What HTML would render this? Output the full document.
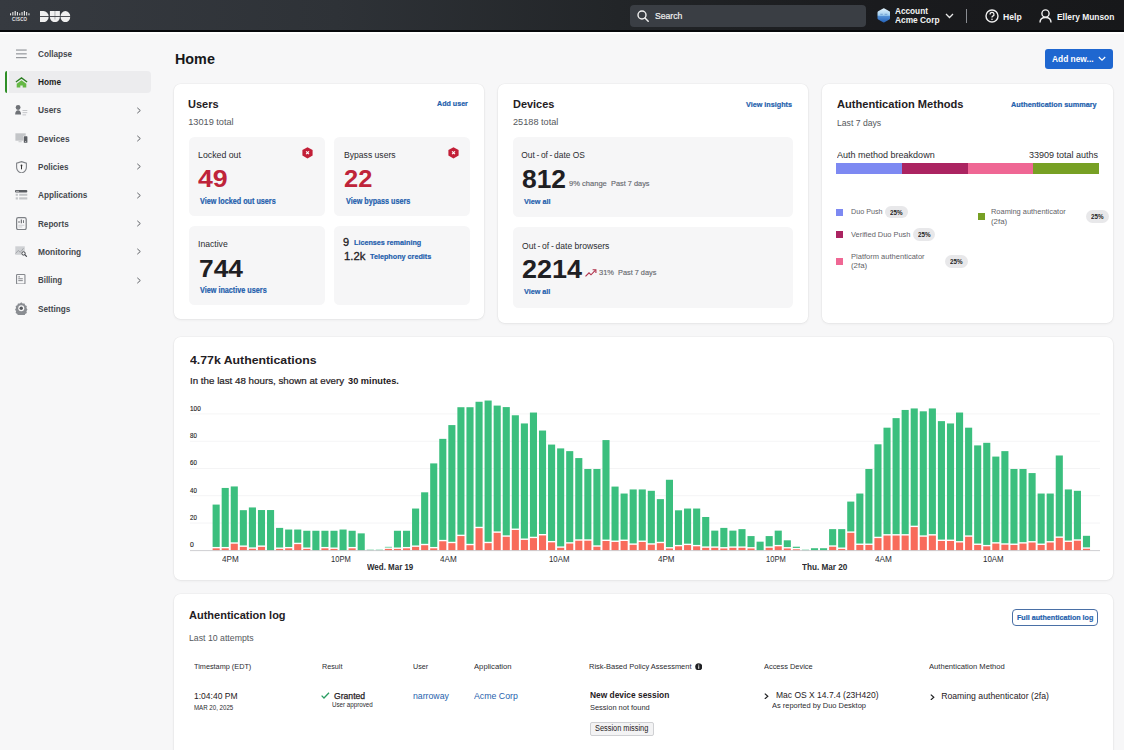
<!DOCTYPE html>
<html><head><meta charset="utf-8"><title>Duo Home</title>
<style>
html,body{margin:0;padding:0;}
body{width:1124px;height:750px;overflow:hidden;position:relative;background:#f7f7f8;font-family:"Liberation Sans",sans-serif;}
.t{position:absolute;white-space:nowrap;transform-origin:0 0;}
.r{position:absolute;}
</style></head><body>
<div class="r" style="left:0px;top:0px;width:1124px;height:31px;background:linear-gradient(90deg,#363a40 0%,#2e3237 30%,#222528 55%,#1a1b1e 78%,#17181a 100%);"></div>
<div class="r" style="left:0px;top:30px;width:1124px;height:1.6px;background:#07090c;"></div>
<div class="r" style="left:0px;top:32px;width:1124px;height:1.6px;background:#ffffff;"></div>
<svg class="r" style="left:10px;top:10.5px" width="20" height="11" viewBox="0 0 20 11">
<g fill="#e6e6e6">
<rect x="0" y="2.3" width="1.1" height="2"/><rect x="2.3" y="1" width="1.1" height="3.5"/><rect x="4.6" y="0" width="1.2" height="4.6"/>
<rect x="6.9" y="1" width="1.1" height="3.5"/><rect x="9.2" y="2.3" width="1.1" height="2"/><rect x="11.5" y="1" width="1.1" height="3.5"/>
<rect x="13.8" y="0" width="1.2" height="4.6"/><rect x="16.1" y="1" width="1.1" height="3.5"/><rect x="18.4" y="2.3" width="1.1" height="2"/>
</g>
<text x="9.7" y="10" font-size="4.6" font-weight="700" fill="#e6e6e6" text-anchor="middle" font-family="Liberation Sans" letter-spacing="0.25" textLength="15.2" lengthAdjust="spacingAndGlyphs">CISCO</text>
</svg>
<svg class="r" style="left:40px;top:11px" width="31" height="11.2" viewBox="0 0 31 11.2">
<g fill="#efefef">
<path d="M0 0h3.4a5.3 5.6 0 0 1 0 11.2H0z"/>
<path d="M9.9 0h10v6a5 5.2 0 0 1 -10 0z"/>
<ellipse cx="25.4" cy="5.6" rx="4.9" ry="5.6"/>
</g>
<rect x="14.5" y="0" width="0.9" height="8.5" fill="#a5a7aa"/>
<rect x="0" y="5.1" width="31" height="0.9" fill="#3a3d42"/>
</svg>
<div class="r" style="left:630px;top:5px;width:236px;height:22px;background:#3a3e44;border-radius:4px;"></div>
<svg class="r" style="left:637px;top:10px" width="12" height="12" viewBox="0 0 12 12"><circle cx="5" cy="5" r="4" fill="none" stroke="#f0f0f0" stroke-width="1.4"/><path d="M8 8l3.2 3.2" stroke="#f0f0f0" stroke-width="1.5" stroke-linecap="round"/></svg>
<div class="t" style="left:655.40px;top:11.23px;font-size:9.80px;line-height:10.95px;color:#f2f2f2;transform:scaleX(0.8820);-webkit-text-stroke:0.2px #f2f2f2;">Search</div>
<svg class="r" style="left:876.8px;top:8.3px" width="13.6" height="14.8" viewBox="0 0 13.6 14.8"><defs><linearGradient id="hg" x1="0" y1="0" x2="0" y2="1"><stop offset="0" stop-color="#e2f2fc"/><stop offset="0.5" stop-color="#9fcdf0"/><stop offset="0.53" stop-color="#5592d8"/><stop offset="1" stop-color="#2462b8"/></linearGradient></defs><path d="M6.1 0.5Q6.8 0.1 7.5 0.5L12.4 3.3Q13.1 3.7 13.1 4.5V10.3Q13.1 11.1 12.4 11.5L7.5 14.3Q6.8 14.7 6.1 14.3L1.2 11.5Q0.5 11.1 0.5 10.3V4.5Q0.5 3.7 1.2 3.3z" fill="url(#hg)"/><path d="M3.3 6.3h2.5M7.6 6.3h2.8" stroke="#5f8fc7" stroke-width="0.9" opacity="0.8"/></svg>
<div class="t" style="left:895.20px;top:6.18px;font-size:9.30px;line-height:10.39px;color:#f4f4f4;font-weight:700;transform:scaleX(0.8844);">Account</div>
<div class="t" style="left:895.20px;top:14.68px;font-size:9.30px;line-height:10.39px;color:#f4f4f4;font-weight:700;transform:scaleX(0.8989);">Acme Corp</div>
<svg class="r" style="left:945px;top:13px" width="9" height="6" viewBox="0 0 9 6"><path d="M1 1l3.5 3.5L8 1" fill="none" stroke="#e8e8e8" stroke-width="1.3"/></svg>
<div class="r" style="left:965.5px;top:9px;width:1.3px;height:14px;background:#8a8d92;"></div>
<svg class="r" style="left:985px;top:9px" width="14" height="14" viewBox="0 0 14 14"><circle cx="7" cy="7" r="6" fill="none" stroke="#f0f0f0" stroke-width="1.4"/><path d="M5 5.4a2 2 0 1 1 2.8 1.8c-.6.3-.8.6-.8 1.3" fill="none" stroke="#f0f0f0" stroke-width="1.3"/><circle cx="7" cy="10.3" r=".8" fill="#f0f0f0"/></svg>
<div class="t" style="left:1003.30px;top:11.90px;font-size:9.50px;line-height:10.61px;color:#f4f4f4;font-weight:700;transform:scaleX(0.9092);">Help</div>
<svg class="r" style="left:1039px;top:9px" width="13" height="14" viewBox="0 0 13 14"><circle cx="6.5" cy="4.5" r="3.6" fill="none" stroke="#f0f0f0" stroke-width="1.4"/><path d="M1 13.5c0-3.2 2.4-5 5.5-5s5.5 1.8 5.5 5" fill="none" stroke="#f0f0f0" stroke-width="1.4"/></svg>
<div class="t" style="left:1056.80px;top:11.90px;font-size:9.50px;line-height:10.61px;color:#f4f4f4;font-weight:700;transform:scaleX(0.8825);">Ellery Munson</div>
<div class="r" style="left:0px;top:33.6px;width:162px;height:716.4px;background:#f7f7f8;"></div>
<div class="r" style="left:8.6px;top:70.8px;width:142px;height:22px;background:#ececee;border-radius:0 4px 4px 0;"></div>
<div class="r" style="left:4.6px;top:71px;width:2.7px;height:22px;background:#2f8f27;border-radius:3px 0 0 3px;"></div>
<div class="t" style="left:37.90px;top:48.68px;font-size:9.30px;line-height:10.39px;color:#45484d;font-weight:700;transform:scaleX(0.8819);">Collapse</div>
<div class="t" style="left:37.90px;top:77.03px;font-size:9.30px;line-height:10.39px;color:#1c1d20;font-weight:700;transform:scaleX(0.8896);">Home</div>
<div class="t" style="left:37.90px;top:105.38px;font-size:9.30px;line-height:10.39px;color:#45484d;font-weight:700;transform:scaleX(0.8973);">Users</div>
<svg class="r" style="left:135.6px;top:106.6px" width="6" height="7" viewBox="0 0 6 7"><path d="M1.3 0.8L4.3 3.5L1.3 6.2" fill="none" stroke="#5a5d62" stroke-width="0.95"/></svg>
<div class="t" style="left:37.90px;top:133.73px;font-size:9.30px;line-height:10.39px;color:#45484d;font-weight:700;transform:scaleX(0.8989);">Devices</div>
<svg class="r" style="left:135.6px;top:135.0px" width="6" height="7" viewBox="0 0 6 7"><path d="M1.3 0.8L4.3 3.5L1.3 6.2" fill="none" stroke="#5a5d62" stroke-width="0.95"/></svg>
<div class="t" style="left:37.90px;top:162.08px;font-size:9.30px;line-height:10.39px;color:#45484d;font-weight:700;transform:scaleX(0.8676);">Policies</div>
<svg class="r" style="left:135.6px;top:163.3px" width="6" height="7" viewBox="0 0 6 7"><path d="M1.3 0.8L4.3 3.5L1.3 6.2" fill="none" stroke="#5a5d62" stroke-width="0.95"/></svg>
<div class="t" style="left:37.90px;top:190.43px;font-size:9.30px;line-height:10.39px;color:#45484d;font-weight:700;transform:scaleX(0.8835);">Applications</div>
<svg class="r" style="left:135.6px;top:191.7px" width="6" height="7" viewBox="0 0 6 7"><path d="M1.3 0.8L4.3 3.5L1.3 6.2" fill="none" stroke="#5a5d62" stroke-width="0.95"/></svg>
<div class="t" style="left:37.90px;top:218.78px;font-size:9.30px;line-height:10.39px;color:#45484d;font-weight:700;transform:scaleX(0.8733);">Reports</div>
<svg class="r" style="left:135.6px;top:220.0px" width="6" height="7" viewBox="0 0 6 7"><path d="M1.3 0.8L4.3 3.5L1.3 6.2" fill="none" stroke="#5a5d62" stroke-width="0.95"/></svg>
<div class="t" style="left:37.90px;top:247.13px;font-size:9.30px;line-height:10.39px;color:#45484d;font-weight:700;transform:scaleX(0.8994);">Monitoring</div>
<svg class="r" style="left:135.6px;top:248.4px" width="6" height="7" viewBox="0 0 6 7"><path d="M1.3 0.8L4.3 3.5L1.3 6.2" fill="none" stroke="#5a5d62" stroke-width="0.95"/></svg>
<div class="t" style="left:37.90px;top:275.48px;font-size:9.30px;line-height:10.39px;color:#45484d;font-weight:700;transform:scaleX(0.8482);">Billing</div>
<svg class="r" style="left:135.6px;top:276.7px" width="6" height="7" viewBox="0 0 6 7"><path d="M1.3 0.8L4.3 3.5L1.3 6.2" fill="none" stroke="#5a5d62" stroke-width="0.95"/></svg>
<div class="t" style="left:37.90px;top:303.83px;font-size:9.30px;line-height:10.39px;color:#45484d;font-weight:700;transform:scaleX(0.8831);">Settings</div>
<svg class="r" style="left:16px;top:48.5px" width="11" height="10" viewBox="0 0 11 10"><g fill="#8c8f94"><rect x="0" y="0.5" width="10.7" height="1.1"/><rect x="0" y="4.3" width="10.7" height="1.1"/><rect x="0" y="8.1" width="10.7" height="1.1"/></g></svg>
<svg class="r" style="left:15px;top:76.5px" width="13" height="11" viewBox="0 0 13 11"><path d="M6.5 3.2L1.7 6.7V10.6H5.3V8.4H7.7V10.6H11.3V6.7z" fill="#65b845"/><path d="M0.9 5.1L6.5 0.9l5.6 4.2" fill="none" stroke="#2c7f22" stroke-width="1.3"/></svg>
<svg class="r" style="left:15px;top:104.5px" width="13" height="11" viewBox="0 0 13 11"><g fill="#6f7277"><circle cx="3.1" cy="2.5" r="2.4"/><path d="M0.1 9.6c0-2.6 1.2-4.3 3-4.3s3 1.7 3 4.3z"/></g><g fill="#b9bbbf"><rect x="7.5" y="5" width="4.8" height="0.8"/><rect x="7.5" y="7.3" width="4.8" height="0.8"/><rect x="7.5" y="9.5" width="3.6" height="0.8"/></g></svg>
<svg class="r" style="left:15px;top:133.3px" width="13" height="10.5" viewBox="0 0 13 10.5"><rect x="0.4" y="0.3" width="10.3" height="7.4" fill="#c3c5c8"/><rect x="3.5" y="8.3" width="3.2" height="0.9" fill="#c3c5c8"/><rect x="8.3" y="2.7" width="4.6" height="7.6" rx=".6" fill="#f7f7f8"/><rect x="8.8" y="3.2" width="3.6" height="6.6" rx=".5" fill="#5c5f64"/><rect x="10.1" y="8.2" width="1" height="0.8" fill="#ddd"/></svg>
<svg class="r" style="left:16px;top:160.6px" width="11.5" height="12.8" viewBox="0 0 11.5 12.8"><path d="M5.5 0.6L10.4 2.1V6.3C10.4 9.2 8.3 11.2 5.5 12.1 2.7 11.2 0.6 9.2 0.6 6.3V2.1z" fill="none" stroke="#808388" stroke-width="1.1"/><circle cx="5.5" cy="4.4" r="0.9" fill="#333"/><rect x="5" y="4.4" width="1" height="3.9" fill="#333"/></svg>
<svg class="r" style="left:15px;top:190px" width="12.5" height="10" viewBox="0 0 12.5 10"><rect x="0" y="0" width="12.3" height="2.5" rx="1" fill="#5a5d62"/><rect x="1" y="0.9" width="3" height="0.7" fill="#ddd"/><g fill="#c3c5c8"><rect x="0.7" y="3.8" width="2.2" height="2"/><rect x="4.2" y="3.8" width="8.1" height="2"/><rect x="0.7" y="7.3" width="2.2" height="2.2"/><rect x="4.2" y="7.3" width="8.1" height="2.2"/></g></svg>
<svg class="r" style="left:16px;top:216.5px" width="11" height="13.2" viewBox="0 0 11 13.2"><rect x="0.6" y="0.6" width="9.6" height="12" rx="1.6" fill="none" stroke="#7d8085" stroke-width="1.2"/><g fill="#55585d"><rect x="2.6" y="4" width="0.8" height="2"/><rect x="4.8" y="2.5" width="1" height="3.8"/><rect x="7.1" y="3.2" width="0.8" height="2.8"/></g><g fill="#c3c5c8"><rect x="2.3" y="7.8" width="6" height="0.8"/><rect x="2.3" y="9.6" width="4" height="0.8"/></g></svg>
<svg class="r" style="left:15px;top:246.3px" width="12.5" height="11" viewBox="0 0 12.5 11"><rect x="0.3" y="0.3" width="9.5" height="8.5" fill="#cfd1d4"/><path d="M0.5 7.5L3.3 4.5 5.3 6.3 8.5 2.2" fill="none" stroke="#9a9da1" stroke-width="0.8"/><circle cx="8.6" cy="7.5" r="2.6" fill="#f7f7f8"/><circle cx="8.5" cy="7.4" r="1.7" fill="none" stroke="#3b3e43" stroke-width="1"/><path d="M9.8 8.7l2 2" stroke="#3b3e43" stroke-width="1.1"/></svg>
<svg class="r" style="left:16px;top:273.6px" width="9.5" height="10.5" viewBox="0 0 9.5 10.5"><rect x="0.55" y="0.55" width="8.4" height="9.4" rx=".8" fill="none" stroke="#85888d" stroke-width="1.1"/><g fill="#6a6d72"><rect x="2.3" y="2.5" width="1.7" height="0.8"/><rect x="2.3" y="4.4" width="4.5" height="0.8"/><rect x="2.3" y="6.3" width="4.5" height="0.8"/></g></svg>
<svg class="r" style="left:15.3px;top:302px" width="12.5" height="12.5" viewBox="0 0 12.5 12.5"><path d="M6.25 0.2l1.4 1.4 1.9-.2.6 1.8 1.7.9-.4 1.9 1 1.6-1 1.6.4 1.9-1.7.9-.6 1.8-1.9-.2-1.4 1.4-1.4-1.4-1.9.2-.6-1.8-1.7-.9.4-1.9-1-1.6 1-1.6-.4-1.9 1.7-.9.6-1.8 1.9.2z" fill="#8a8d92"/><circle cx="6.25" cy="6.25" r="3" fill="#f7f7f8"/><circle cx="6.25" cy="6.25" r="1.7" fill="#55585d"/></svg>
<div class="r" style="left:162px;top:33.6px;width:962px;height:716.4px;background:#f7f7f8;"></div>
<div class="t" style="left:175.30px;top:51.09px;font-size:14.60px;line-height:16.31px;color:#16171a;font-weight:700;transform:scaleX(0.9830);">Home</div>
<div class="r" style="left:1045px;top:49px;width:68px;height:20px;background:#1f67d0;border-radius:3px;"></div>
<div class="t" style="left:1051.80px;top:55.02px;font-size:8.60px;line-height:9.61px;color:#ffffff;font-weight:700;transform:scaleX(0.9743);">Add new...</div>
<svg class="r" style="left:1097.5px;top:56px" width="8" height="6" viewBox="0 0 8 6"><path d="M0.8 1l3.2 3.2L7.2 1" fill="none" stroke="#fff" stroke-width="1.2"/></svg>
<div class="r" style="left:174px;top:83.5px;width:310px;height:235.7px;background:#fff;border-radius:6.5px;box-shadow:0 0 0 0.6px rgba(0,0,0,0.045),0 1px 3px rgba(0,0,0,0.06);"></div>
<div class="t" style="left:188.20px;top:97.80px;font-size:11.60px;line-height:12.96px;color:#1f2023;font-weight:700;transform:scaleX(0.9489);">Users</div>
<div class="t" style="left:436.50px;top:100.32px;font-size:7.60px;line-height:8.49px;color:#1f5fad;font-weight:700;-webkit-text-stroke:0.2px #1f5fad;transform:scaleX(0.9379);">Add user</div>
<div class="t" style="left:188.20px;top:117.37px;font-size:9.20px;line-height:10.28px;color:#55585d;">13019 total</div>
<div class="r" style="left:188.5px;top:137px;width:136px;height:79.4px;background:#f6f6f7;border-radius:5.5px;"></div>
<div class="r" style="left:334px;top:137px;width:135.5px;height:79.4px;background:#f6f6f7;border-radius:5.5px;"></div>
<div class="r" style="left:188.5px;top:226px;width:136px;height:79px;background:#f6f6f7;border-radius:5.5px;"></div>
<div class="r" style="left:334px;top:226px;width:135.5px;height:79px;background:#f6f6f7;border-radius:5.5px;"></div>
<div class="t" style="left:198.00px;top:150.17px;font-size:9.20px;line-height:10.28px;color:#2b2c30;transform:scaleX(0.9548);">Locked out</div>
<div class="t" style="left:198.00px;top:165.15px;font-size:24.70px;line-height:27.59px;color:#bf243a;font-weight:700;transform:scaleX(1.0833);">49</div>
<div class="t" style="left:200.00px;top:196.78px;font-size:8.20px;line-height:9.16px;color:#1f5fad;font-weight:700;-webkit-text-stroke:0.2px #1f5fad;transform:scaleX(0.8816);">View locked out users</div>
<div class="t" style="left:343.70px;top:150.17px;font-size:9.20px;line-height:10.28px;color:#2b2c30;transform:scaleX(0.9358);">Bypass users</div>
<div class="t" style="left:344.40px;top:165.15px;font-size:24.70px;line-height:27.59px;color:#bf243a;font-weight:700;transform:scaleX(1.0322);">22</div>
<div class="t" style="left:345.60px;top:196.78px;font-size:8.20px;line-height:9.16px;color:#1f5fad;font-weight:700;-webkit-text-stroke:0.2px #1f5fad;transform:scaleX(0.8795);">View bypass users</div>
<svg class="r" style="left:302.4px;top:147.3px" width="11" height="11.5" viewBox="0 0 11 11.5"><path d="M5.5 0.2L10.6 3v5.6L5.5 11.4 0.4 8.6V3z" fill="#c21f37"/><path d="M4.1 4.3l2.9 2.9M7 4.3L4.1 7.2" stroke="#fff" stroke-width="1.15"/></svg>
<svg class="r" style="left:447.8px;top:147.3px" width="11" height="11.5" viewBox="0 0 11 11.5"><path d="M5.5 0.2L10.6 3v5.6L5.5 11.4 0.4 8.6V3z" fill="#c21f37"/><path d="M4.1 4.3l2.9 2.9M7 4.3L4.1 7.2" stroke="#fff" stroke-width="1.15"/></svg>
<div class="t" style="left:198.00px;top:238.87px;font-size:9.20px;line-height:10.28px;color:#2b2c30;transform:scaleX(0.9371);">Inactive</div>
<div class="t" style="left:198.70px;top:254.85px;font-size:24.70px;line-height:27.59px;color:#1f2023;font-weight:700;transform:scaleX(1.0667);">744</div>
<div class="t" style="left:200.00px;top:285.78px;font-size:8.20px;line-height:9.16px;color:#1f5fad;font-weight:700;-webkit-text-stroke:0.2px #1f5fad;transform:scaleX(0.8845);">View inactive users</div>
<div class="t" style="left:343.30px;top:236.98px;font-size:10.30px;line-height:11.51px;color:#1f2023;transform:scaleX(1.0671);-webkit-text-stroke:0.3px #1f2023;">9</div>
<div class="t" style="left:354.00px;top:238.86px;font-size:8.00px;line-height:8.94px;color:#1f5fad;font-weight:700;-webkit-text-stroke:0.2px #1f5fad;transform:scaleX(0.8998);">Licenses remaining</div>
<div class="t" style="left:343.70px;top:250.91px;font-size:10.60px;line-height:11.84px;color:#1f2023;transform:scaleX(1.0654);-webkit-text-stroke:0.3px #1f2023;">1.2k</div>
<div class="t" style="left:370.40px;top:253.26px;font-size:8.00px;line-height:8.94px;color:#1f5fad;font-weight:700;-webkit-text-stroke:0.2px #1f5fad;transform:scaleX(0.9031);">Telephony credits</div>
<div class="r" style="left:498px;top:83.5px;width:310px;height:239.5px;background:#fff;border-radius:6.5px;box-shadow:0 0 0 0.6px rgba(0,0,0,0.045),0 1px 3px rgba(0,0,0,0.06);"></div>
<div class="t" style="left:512.80px;top:98.18px;font-size:11.40px;line-height:12.73px;color:#1f2023;font-weight:700;transform:scaleX(0.9607);">Devices</div>
<div class="t" style="left:745.70px;top:100.92px;font-size:7.60px;line-height:8.49px;color:#1f5fad;font-weight:700;-webkit-text-stroke:0.2px #1f5fad;transform:scaleX(0.9502);">View insights</div>
<div class="t" style="left:512.80px;top:117.29px;font-size:9.40px;line-height:10.50px;color:#55585d;transform:scaleX(0.9779);">25188 total</div>
<div class="r" style="left:512.7px;top:137.2px;width:280.6px;height:80px;background:#f6f6f7;border-radius:5.5px;"></div>
<div class="r" style="left:512.7px;top:227.3px;width:280.6px;height:80.4px;background:#f6f6f7;border-radius:5.5px;"></div>
<div class="t" style="left:521.30px;top:150.70px;font-size:8.40px;line-height:9.38px;color:#2b2c30;">Out - of - date OS</div>
<div class="t" style="left:521.70px;top:164.65px;font-size:25.80px;line-height:28.82px;color:#1f2023;font-weight:700;transform:scaleX(1.0235);">812</div>
<div class="t" style="left:569.20px;top:180.26px;font-size:8.00px;line-height:8.94px;color:#66696e;transform:scaleX(0.9441);-webkit-text-stroke:0.15px #66696e;">9% change</div>
<div class="t" style="left:611.20px;top:180.26px;font-size:8.00px;line-height:8.94px;color:#66696e;transform:scaleX(0.9211);-webkit-text-stroke:0.15px #66696e;">Past 7 days</div>
<div class="t" style="left:523.50px;top:197.76px;font-size:8.00px;line-height:8.94px;color:#1f5fad;font-weight:700;-webkit-text-stroke:0.2px #1f5fad;transform:scaleX(0.9075);">View all</div>
<div class="t" style="left:521.70px;top:242.10px;font-size:8.40px;line-height:9.38px;color:#2b2c30;transform:scaleX(1.0229);">Out - of - date browsers</div>
<div class="t" style="left:521.70px;top:255.45px;font-size:25.80px;line-height:28.82px;color:#1f2023;font-weight:700;transform:scaleX(1.0452);">2214</div>
<svg class="r" style="left:585px;top:269px" width="12" height="8" viewBox="0 0 12 8"><path d="M0.5 7.3L4 3.8l2 2L10.5 1.2" fill="none" stroke="#b0304a" stroke-width="1.1"/><path d="M7.6 0.8h3.3v3.3" fill="none" stroke="#b0304a" stroke-width="1.1"/></svg>
<div class="t" style="left:598.80px;top:269.46px;font-size:8.00px;line-height:8.94px;color:#66696e;transform:scaleX(0.9313);-webkit-text-stroke:0.15px #66696e;">31%</div>
<div class="t" style="left:618.40px;top:269.46px;font-size:8.00px;line-height:8.94px;color:#66696e;transform:scaleX(0.9163);-webkit-text-stroke:0.15px #66696e;">Past 7 days</div>
<div class="t" style="left:523.70px;top:287.76px;font-size:8.00px;line-height:8.94px;color:#1f5fad;font-weight:700;-webkit-text-stroke:0.2px #1f5fad;transform:scaleX(0.9007);">View all</div>
<div class="r" style="left:822px;top:83.5px;width:291px;height:239px;background:#fff;border-radius:6.5px;box-shadow:0 0 0 0.6px rgba(0,0,0,0.045),0 1px 3px rgba(0,0,0,0.06);"></div>
<div class="t" style="left:836.70px;top:98.30px;font-size:11.60px;line-height:12.96px;color:#1f2023;font-weight:700;transform:scaleX(0.9582);">Authentication Methods</div>
<div class="t" style="left:1011.00px;top:100.92px;font-size:7.60px;line-height:8.49px;color:#1f5fad;font-weight:700;-webkit-text-stroke:0.2px #1f5fad;transform:scaleX(0.9617);">Authentication summary</div>
<div class="t" style="left:836.70px;top:117.69px;font-size:9.40px;line-height:10.50px;color:#55585d;transform:scaleX(0.9214);">Last 7 days</div>
<div class="t" style="left:836.70px;top:150.49px;font-size:9.40px;line-height:10.50px;color:#2b2c30;transform:scaleX(0.9608);">Auth method breakdown</div>
<div class="t" style="left:1029.30px;top:150.49px;font-size:9.40px;line-height:10.50px;color:#2b2c30;transform:scaleX(0.9606);">33909 total auths</div>
<div class="r" style="left:836.3px;top:162.9px;width:65.7px;height:10.7px;background:#7d89f2;"></div>
<div class="r" style="left:902px;top:162.9px;width:65.5px;height:10.7px;background:#ab2461;"></div>
<div class="r" style="left:967.5px;top:162.9px;width:65.5px;height:10.7px;background:#ef6794;"></div>
<div class="r" style="left:1033px;top:162.9px;width:65.6px;height:10.7px;background:#77a024;"></div>
<div class="r" style="left:836.3px;top:209px;width:7px;height:7px;background:#7d89f2;"></div>
<div class="t" style="left:850.70px;top:208.32px;font-size:7.60px;line-height:8.49px;color:#5f6267;transform:scaleX(0.9471);">Duo Push</div>
<div class="r" style="left:885.3px;top:206px;width:22.4px;height:12.3px;background:#e8e8ea;border-radius:7px;"></div>
<div class="t" style="left:890.00px;top:208.84px;font-size:6.70px;line-height:7.48px;color:#222;font-weight:700;transform:scaleX(0.9403);">25%</div>
<div class="r" style="left:836.3px;top:231.4px;width:7px;height:7px;background:#ab2461;"></div>
<div class="t" style="left:850.70px;top:230.82px;font-size:7.60px;line-height:8.49px;color:#5f6267;transform:scaleX(0.9780);">Verified Duo Push</div>
<div class="r" style="left:913px;top:228.4px;width:22.4px;height:12.5px;background:#e8e8ea;border-radius:7px;"></div>
<div class="t" style="left:917.70px;top:231.24px;font-size:6.70px;line-height:7.48px;color:#222;font-weight:700;transform:scaleX(0.9403);">25%</div>
<div class="r" style="left:836.3px;top:257.8px;width:7px;height:7px;background:#ef6794;"></div>
<div class="t" style="left:850.70px;top:252.62px;font-size:7.60px;line-height:8.49px;color:#5f6267;transform:scaleX(0.9910);">Platform authenticator</div>
<div class="t" style="left:850.70px;top:262.22px;font-size:7.60px;line-height:8.49px;color:#5f6267;transform:scaleX(1.0373);">(2fa)</div>
<div class="r" style="left:945px;top:255px;width:22.5px;height:12.5px;background:#e8e8ea;border-radius:7px;"></div>
<div class="t" style="left:949.70px;top:257.84px;font-size:6.70px;line-height:7.48px;color:#222;font-weight:700;transform:scaleX(0.9403);">25%</div>
<div class="r" style="left:977.5px;top:212.7px;width:7px;height:7px;background:#77a024;"></div>
<div class="t" style="left:991.40px;top:208.32px;font-size:7.60px;line-height:8.49px;color:#5f6267;transform:scaleX(0.9783);">Roaming authenticator</div>
<div class="t" style="left:991.40px;top:217.92px;font-size:7.60px;line-height:8.49px;color:#5f6267;transform:scaleX(1.0373);">(2fa)</div>
<div class="r" style="left:1086px;top:210.3px;width:22.5px;height:12.4px;background:#e8e8ea;border-radius:7px;"></div>
<div class="t" style="left:1090.70px;top:213.14px;font-size:6.70px;line-height:7.48px;color:#222;font-weight:700;transform:scaleX(0.9403);">25%</div>
<div class="r" style="left:174px;top:336.5px;width:939px;height:243.5px;background:#fff;border-radius:6.5px;box-shadow:0 0 0 0.6px rgba(0,0,0,0.045),0 1px 3px rgba(0,0,0,0.06);"></div>
<div class="t" style="left:190.20px;top:354.12px;font-size:11.80px;line-height:13.18px;color:#1f2023;font-weight:700;transform:scaleX(1.0416);">4.77k Authentications</div>
<div class="t" style="left:0;top:0"></div>
<div class="t" style="left:190.00px;top:375.59px;font-size:9.40px;line-height:10.50px;color:#1f2023;transform:scaleX(1.0413);-webkit-text-stroke:0.2px #1f2023;">In the last 48 hours, shown at every</div>
<div class="t" style="left:348.00px;top:375.59px;font-size:9.40px;line-height:10.50px;color:#1f2023;font-weight:700;transform:scaleX(0.9865);">30 minutes.</div>
<svg class="r" style="left:0;top:0" width="1124" height="750" viewBox="0 0 1124 750"><rect x="190" y="522.63" width="910" height="0.8" fill="#f2f2f3"/><rect x="190" y="495.36" width="910" height="0.8" fill="#f2f2f3"/><rect x="190" y="468.08" width="910" height="0.8" fill="#f2f2f3"/><rect x="190" y="440.81" width="910" height="0.8" fill="#f2f2f3"/><rect x="190" y="413.54" width="910" height="0.8" fill="#f2f2f3"/><rect x="212.60" y="548.35" width="7.1" height="2.05" fill="#f86b5b"/><rect x="212.60" y="504.58" width="7.1" height="42.37" fill="#3bbf7e"/><rect x="221.67" y="548.35" width="7.1" height="2.05" fill="#f86b5b"/><rect x="221.67" y="487.95" width="7.1" height="59.01" fill="#3bbf7e"/><rect x="230.73" y="543.72" width="7.1" height="6.68" fill="#f86b5b"/><rect x="230.73" y="486.45" width="7.1" height="55.87" fill="#3bbf7e"/><rect x="239.80" y="546.85" width="7.1" height="3.55" fill="#f86b5b"/><rect x="239.80" y="510.17" width="7.1" height="35.28" fill="#3bbf7e"/><rect x="248.86" y="548.76" width="7.1" height="1.64" fill="#f86b5b"/><rect x="248.86" y="507.45" width="7.1" height="39.92" fill="#3bbf7e"/><rect x="257.93" y="546.85" width="7.1" height="3.55" fill="#f86b5b"/><rect x="257.93" y="510.04" width="7.1" height="35.42" fill="#3bbf7e"/><rect x="267.00" y="510.04" width="7.1" height="40.36" fill="#3bbf7e"/><rect x="276.06" y="548.90" width="7.1" height="1.50" fill="#f86b5b"/><rect x="276.06" y="527.90" width="7.1" height="19.60" fill="#3bbf7e"/><rect x="285.13" y="548.35" width="7.1" height="2.05" fill="#f86b5b"/><rect x="285.13" y="529.54" width="7.1" height="17.42" fill="#3bbf7e"/><rect x="294.19" y="544.13" width="7.1" height="6.27" fill="#f86b5b"/><rect x="294.19" y="529.54" width="7.1" height="13.19" fill="#3bbf7e"/><rect x="303.26" y="548.90" width="7.1" height="1.50" fill="#f86b5b"/><rect x="303.26" y="530.76" width="7.1" height="16.74" fill="#3bbf7e"/><rect x="312.33" y="530.76" width="7.1" height="19.64" fill="#3bbf7e"/><rect x="321.39" y="548.35" width="7.1" height="2.05" fill="#f86b5b"/><rect x="321.39" y="530.76" width="7.1" height="16.19" fill="#3bbf7e"/><rect x="330.46" y="548.90" width="7.1" height="1.50" fill="#f86b5b"/><rect x="330.46" y="530.76" width="7.1" height="16.74" fill="#3bbf7e"/><rect x="339.52" y="529.54" width="7.1" height="20.86" fill="#3bbf7e"/><rect x="348.59" y="548.35" width="7.1" height="2.05" fill="#f86b5b"/><rect x="348.59" y="530.76" width="7.1" height="16.19" fill="#3bbf7e"/><rect x="357.66" y="533.36" width="7.1" height="17.04" fill="#3bbf7e"/><rect x="366.72" y="549.72" width="7.1" height="0.68" fill="#3bbf7e"/><rect x="375.79" y="549.72" width="7.1" height="0.68" fill="#3bbf7e"/><rect x="384.85" y="548.90" width="7.1" height="1.50" fill="#f86b5b"/><rect x="384.85" y="546.85" width="7.1" height="0.65" fill="#3bbf7e"/><rect x="393.92" y="548.90" width="7.1" height="1.50" fill="#f86b5b"/><rect x="393.92" y="530.76" width="7.1" height="16.74" fill="#3bbf7e"/><rect x="402.99" y="548.35" width="7.1" height="2.05" fill="#f86b5b"/><rect x="402.99" y="530.76" width="7.1" height="16.19" fill="#3bbf7e"/><rect x="412.05" y="546.85" width="7.1" height="3.55" fill="#f86b5b"/><rect x="412.05" y="508.54" width="7.1" height="36.92" fill="#3bbf7e"/><rect x="421.12" y="545.22" width="7.1" height="5.18" fill="#f86b5b"/><rect x="421.12" y="492.31" width="7.1" height="51.51" fill="#3bbf7e"/><rect x="430.18" y="548.35" width="7.1" height="2.05" fill="#f86b5b"/><rect x="430.18" y="463.40" width="7.1" height="83.55" fill="#3bbf7e"/><rect x="439.25" y="541.26" width="7.1" height="9.14" fill="#f86b5b"/><rect x="439.25" y="438.86" width="7.1" height="101.01" fill="#3bbf7e"/><rect x="448.32" y="543.17" width="7.1" height="7.23" fill="#f86b5b"/><rect x="448.32" y="425.09" width="7.1" height="116.69" fill="#3bbf7e"/><rect x="457.38" y="536.08" width="7.1" height="14.32" fill="#f86b5b"/><rect x="457.38" y="407.22" width="7.1" height="127.46" fill="#3bbf7e"/><rect x="466.45" y="545.22" width="7.1" height="5.18" fill="#f86b5b"/><rect x="466.45" y="407.22" width="7.1" height="136.60" fill="#3bbf7e"/><rect x="475.51" y="528.17" width="7.1" height="22.23" fill="#f86b5b"/><rect x="475.51" y="401.77" width="7.1" height="125.01" fill="#3bbf7e"/><rect x="484.58" y="543.17" width="7.1" height="7.23" fill="#f86b5b"/><rect x="484.58" y="400.54" width="7.1" height="141.23" fill="#3bbf7e"/><rect x="493.65" y="532.81" width="7.1" height="17.59" fill="#f86b5b"/><rect x="493.65" y="405.59" width="7.1" height="125.82" fill="#3bbf7e"/><rect x="502.71" y="536.76" width="7.1" height="13.64" fill="#f86b5b"/><rect x="502.71" y="407.09" width="7.1" height="128.28" fill="#3bbf7e"/><rect x="511.78" y="529.95" width="7.1" height="20.45" fill="#f86b5b"/><rect x="511.78" y="415.27" width="7.1" height="113.28" fill="#3bbf7e"/><rect x="520.84" y="539.90" width="7.1" height="10.50" fill="#f86b5b"/><rect x="520.84" y="423.45" width="7.1" height="115.05" fill="#3bbf7e"/><rect x="529.91" y="538.13" width="7.1" height="12.27" fill="#f86b5b"/><rect x="529.91" y="412.54" width="7.1" height="124.19" fill="#3bbf7e"/><rect x="538.98" y="535.40" width="7.1" height="15.00" fill="#f86b5b"/><rect x="538.98" y="430.54" width="7.1" height="103.46" fill="#3bbf7e"/><rect x="548.04" y="542.35" width="7.1" height="8.05" fill="#f86b5b"/><rect x="548.04" y="444.58" width="7.1" height="96.37" fill="#3bbf7e"/><rect x="557.11" y="547.81" width="7.1" height="2.59" fill="#f86b5b"/><rect x="557.11" y="448.40" width="7.1" height="98.01" fill="#3bbf7e"/><rect x="566.17" y="543.58" width="7.1" height="6.82" fill="#f86b5b"/><rect x="566.17" y="451.13" width="7.1" height="91.05" fill="#3bbf7e"/><rect x="575.24" y="540.72" width="7.1" height="9.68" fill="#f86b5b"/><rect x="575.24" y="458.08" width="7.1" height="81.23" fill="#3bbf7e"/><rect x="584.31" y="540.72" width="7.1" height="9.68" fill="#f86b5b"/><rect x="584.31" y="468.99" width="7.1" height="70.33" fill="#3bbf7e"/><rect x="593.37" y="546.72" width="7.1" height="3.68" fill="#f86b5b"/><rect x="593.37" y="468.99" width="7.1" height="76.33" fill="#3bbf7e"/><rect x="602.44" y="540.99" width="7.1" height="9.41" fill="#f86b5b"/><rect x="602.44" y="440.08" width="7.1" height="99.51" fill="#3bbf7e"/><rect x="611.50" y="541.95" width="7.1" height="8.45" fill="#f86b5b"/><rect x="611.50" y="486.58" width="7.1" height="53.96" fill="#3bbf7e"/><rect x="620.57" y="540.99" width="7.1" height="9.41" fill="#f86b5b"/><rect x="620.57" y="493.54" width="7.1" height="46.05" fill="#3bbf7e"/><rect x="629.64" y="544.81" width="7.1" height="5.59" fill="#f86b5b"/><rect x="629.64" y="489.45" width="7.1" height="53.96" fill="#3bbf7e"/><rect x="638.70" y="541.95" width="7.1" height="8.45" fill="#f86b5b"/><rect x="638.70" y="489.45" width="7.1" height="51.10" fill="#3bbf7e"/><rect x="647.77" y="544.67" width="7.1" height="5.73" fill="#f86b5b"/><rect x="647.77" y="490.81" width="7.1" height="52.46" fill="#3bbf7e"/><rect x="656.83" y="543.17" width="7.1" height="7.23" fill="#f86b5b"/><rect x="656.83" y="499.13" width="7.1" height="42.64" fill="#3bbf7e"/><rect x="665.90" y="548.49" width="7.1" height="1.91" fill="#f86b5b"/><rect x="665.90" y="479.77" width="7.1" height="67.33" fill="#3bbf7e"/><rect x="674.97" y="546.31" width="7.1" height="4.09" fill="#f86b5b"/><rect x="674.97" y="510.31" width="7.1" height="34.60" fill="#3bbf7e"/><rect x="684.03" y="545.08" width="7.1" height="5.32" fill="#f86b5b"/><rect x="684.03" y="508.54" width="7.1" height="35.14" fill="#3bbf7e"/><rect x="693.10" y="546.31" width="7.1" height="4.09" fill="#f86b5b"/><rect x="693.10" y="508.54" width="7.1" height="36.37" fill="#3bbf7e"/><rect x="702.16" y="547.81" width="7.1" height="2.59" fill="#f86b5b"/><rect x="702.16" y="516.99" width="7.1" height="29.42" fill="#3bbf7e"/><rect x="711.23" y="547.81" width="7.1" height="2.59" fill="#f86b5b"/><rect x="711.23" y="530.63" width="7.1" height="15.78" fill="#3bbf7e"/><rect x="720.30" y="548.49" width="7.1" height="1.91" fill="#f86b5b"/><rect x="720.30" y="527.90" width="7.1" height="19.19" fill="#3bbf7e"/><rect x="729.36" y="547.81" width="7.1" height="2.59" fill="#f86b5b"/><rect x="729.36" y="530.63" width="7.1" height="15.78" fill="#3bbf7e"/><rect x="738.43" y="547.81" width="7.1" height="2.59" fill="#f86b5b"/><rect x="738.43" y="529.13" width="7.1" height="17.28" fill="#3bbf7e"/><rect x="747.49" y="548.49" width="7.1" height="1.91" fill="#f86b5b"/><rect x="747.49" y="536.08" width="7.1" height="11.01" fill="#3bbf7e"/><rect x="756.56" y="541.67" width="7.1" height="8.73" fill="#3bbf7e"/><rect x="765.63" y="547.81" width="7.1" height="2.59" fill="#f86b5b"/><rect x="765.63" y="536.08" width="7.1" height="10.33" fill="#3bbf7e"/><rect x="774.69" y="546.31" width="7.1" height="4.09" fill="#f86b5b"/><rect x="774.69" y="530.63" width="7.1" height="14.28" fill="#3bbf7e"/><rect x="783.76" y="548.49" width="7.1" height="1.91" fill="#f86b5b"/><rect x="783.76" y="540.31" width="7.1" height="6.78" fill="#3bbf7e"/><rect x="792.82" y="549.31" width="7.1" height="1.09" fill="#f86b5b"/><rect x="792.82" y="546.72" width="7.1" height="1.19" fill="#3bbf7e"/><rect x="801.89" y="549.72" width="7.1" height="0.68" fill="#3bbf7e"/><rect x="810.96" y="548.22" width="7.1" height="2.18" fill="#3bbf7e"/><rect x="820.02" y="548.22" width="7.1" height="2.18" fill="#3bbf7e"/><rect x="829.09" y="546.72" width="7.1" height="3.68" fill="#f86b5b"/><rect x="829.09" y="529.13" width="7.1" height="16.19" fill="#3bbf7e"/><rect x="838.15" y="548.90" width="7.1" height="1.50" fill="#f86b5b"/><rect x="838.15" y="529.13" width="7.1" height="18.37" fill="#3bbf7e"/><rect x="847.22" y="532.81" width="7.1" height="17.59" fill="#f86b5b"/><rect x="847.22" y="501.58" width="7.1" height="29.83" fill="#3bbf7e"/><rect x="856.29" y="544.95" width="7.1" height="5.45" fill="#f86b5b"/><rect x="856.29" y="493.54" width="7.1" height="50.01" fill="#3bbf7e"/><rect x="865.35" y="544.95" width="7.1" height="5.45" fill="#f86b5b"/><rect x="865.35" y="468.99" width="7.1" height="74.55" fill="#3bbf7e"/><rect x="874.42" y="538.13" width="7.1" height="12.27" fill="#f86b5b"/><rect x="874.42" y="444.31" width="7.1" height="92.42" fill="#3bbf7e"/><rect x="883.48" y="535.54" width="7.1" height="14.86" fill="#f86b5b"/><rect x="883.48" y="427.68" width="7.1" height="106.46" fill="#3bbf7e"/><rect x="892.55" y="535.54" width="7.1" height="14.86" fill="#f86b5b"/><rect x="892.55" y="418.13" width="7.1" height="116.01" fill="#3bbf7e"/><rect x="901.62" y="535.54" width="7.1" height="14.86" fill="#f86b5b"/><rect x="901.62" y="409.95" width="7.1" height="124.19" fill="#3bbf7e"/><rect x="910.68" y="527.08" width="7.1" height="23.32" fill="#f86b5b"/><rect x="910.68" y="408.45" width="7.1" height="117.23" fill="#3bbf7e"/><rect x="919.75" y="536.76" width="7.1" height="13.64" fill="#f86b5b"/><rect x="919.75" y="411.31" width="7.1" height="124.05" fill="#3bbf7e"/><rect x="928.81" y="535.54" width="7.1" height="14.86" fill="#f86b5b"/><rect x="928.81" y="408.45" width="7.1" height="125.69" fill="#3bbf7e"/><rect x="937.88" y="540.99" width="7.1" height="9.41" fill="#f86b5b"/><rect x="937.88" y="421.13" width="7.1" height="118.46" fill="#3bbf7e"/><rect x="946.95" y="540.99" width="7.1" height="9.41" fill="#f86b5b"/><rect x="946.95" y="423.45" width="7.1" height="116.14" fill="#3bbf7e"/><rect x="956.01" y="542.49" width="7.1" height="7.91" fill="#f86b5b"/><rect x="956.01" y="412.54" width="7.1" height="128.55" fill="#3bbf7e"/><rect x="965.08" y="536.76" width="7.1" height="13.64" fill="#f86b5b"/><rect x="965.08" y="427.68" width="7.1" height="107.69" fill="#3bbf7e"/><rect x="974.14" y="544.95" width="7.1" height="5.45" fill="#f86b5b"/><rect x="974.14" y="445.40" width="7.1" height="98.14" fill="#3bbf7e"/><rect x="983.21" y="546.31" width="7.1" height="4.09" fill="#f86b5b"/><rect x="983.21" y="442.81" width="7.1" height="102.10" fill="#3bbf7e"/><rect x="992.28" y="543.58" width="7.1" height="6.82" fill="#f86b5b"/><rect x="992.28" y="456.58" width="7.1" height="85.60" fill="#3bbf7e"/><rect x="1001.34" y="544.67" width="7.1" height="5.73" fill="#f86b5b"/><rect x="1001.34" y="451.13" width="7.1" height="92.14" fill="#3bbf7e"/><rect x="1010.41" y="544.95" width="7.1" height="5.45" fill="#f86b5b"/><rect x="1010.41" y="468.99" width="7.1" height="74.55" fill="#3bbf7e"/><rect x="1019.47" y="543.58" width="7.1" height="6.82" fill="#f86b5b"/><rect x="1019.47" y="468.99" width="7.1" height="73.19" fill="#3bbf7e"/><rect x="1028.54" y="542.49" width="7.1" height="7.91" fill="#f86b5b"/><rect x="1028.54" y="473.08" width="7.1" height="68.01" fill="#3bbf7e"/><rect x="1037.61" y="544.95" width="7.1" height="5.45" fill="#f86b5b"/><rect x="1037.61" y="493.54" width="7.1" height="50.01" fill="#3bbf7e"/><rect x="1046.67" y="542.49" width="7.1" height="7.91" fill="#f86b5b"/><rect x="1046.67" y="493.54" width="7.1" height="47.55" fill="#3bbf7e"/><rect x="1055.74" y="537.85" width="7.1" height="12.55" fill="#f86b5b"/><rect x="1055.74" y="455.49" width="7.1" height="80.96" fill="#3bbf7e"/><rect x="1064.80" y="541.95" width="7.1" height="8.45" fill="#f86b5b"/><rect x="1064.80" y="489.45" width="7.1" height="51.10" fill="#3bbf7e"/><rect x="1073.87" y="540.72" width="7.1" height="9.68" fill="#f86b5b"/><rect x="1073.87" y="490.81" width="7.1" height="48.51" fill="#3bbf7e"/><rect x="1082.94" y="548.76" width="7.1" height="1.64" fill="#f86b5b"/><rect x="1082.94" y="535.81" width="7.1" height="11.55" fill="#3bbf7e"/><rect x="190" y="550.20" width="910" height="0.9" fill="#c9c9cc"/></svg>
<div class="t" style="left:190.20px;top:541.11px;font-size:7.50px;line-height:8.38px;color:#222;transform:scaleX(0.9129);-webkit-text-stroke:0.15px #222;">0</div>
<div class="t" style="left:190.20px;top:513.84px;font-size:7.50px;line-height:8.38px;color:#222;transform:scaleX(0.8168);-webkit-text-stroke:0.15px #222;">20</div>
<div class="t" style="left:190.20px;top:486.57px;font-size:7.50px;line-height:8.38px;color:#222;transform:scaleX(0.8168);-webkit-text-stroke:0.15px #222;">40</div>
<div class="t" style="left:190.20px;top:459.30px;font-size:7.50px;line-height:8.38px;color:#222;transform:scaleX(0.8168);-webkit-text-stroke:0.15px #222;">60</div>
<div class="t" style="left:190.20px;top:432.02px;font-size:7.50px;line-height:8.38px;color:#222;transform:scaleX(0.8168);-webkit-text-stroke:0.15px #222;">80</div>
<div class="t" style="left:190.20px;top:404.75px;font-size:7.50px;line-height:8.38px;color:#222;transform:scaleX(0.8543);-webkit-text-stroke:0.15px #222;">100</div>
<div class="t" style="left:222.40px;top:554.94px;font-size:8.80px;line-height:9.83px;color:#2b2c30;transform:scaleX(0.9235);">4PM</div>
<div class="t" style="left:331.30px;top:554.94px;font-size:8.80px;line-height:9.83px;color:#2b2c30;transform:scaleX(0.8577);">10PM</div>
<div class="t" style="left:440.40px;top:554.94px;font-size:8.80px;line-height:9.83px;color:#2b2c30;transform:scaleX(0.9235);">4AM</div>
<div class="t" style="left:548.70px;top:554.94px;font-size:8.80px;line-height:9.83px;color:#2b2c30;transform:scaleX(0.8882);">10AM</div>
<div class="t" style="left:657.50px;top:554.94px;font-size:8.80px;line-height:9.83px;color:#2b2c30;transform:scaleX(0.9124);">4PM</div>
<div class="t" style="left:766.20px;top:554.94px;font-size:8.80px;line-height:9.83px;color:#2b2c30;transform:scaleX(0.8577);">10PM</div>
<div class="t" style="left:875.20px;top:554.94px;font-size:8.80px;line-height:9.83px;color:#2b2c30;transform:scaleX(0.9345);">4AM</div>
<div class="t" style="left:983.00px;top:554.94px;font-size:8.80px;line-height:9.83px;color:#2b2c30;transform:scaleX(0.9013);">10AM</div>
<div class="t" style="left:367.40px;top:562.94px;font-size:8.80px;line-height:9.83px;color:#2b2c30;font-weight:700;transform:scaleX(0.9048);">Wed. Mar 19</div>
<div class="t" style="left:802.40px;top:562.94px;font-size:8.80px;line-height:9.83px;color:#2b2c30;font-weight:700;transform:scaleX(0.9287);">Thu. Mar 20</div>
<div class="r" style="left:174.3px;top:594.3px;width:939px;height:200px;background:#fff;border-radius:6.5px;box-shadow:0 0 0 0.6px rgba(0,0,0,0.045),0 1px 3px rgba(0,0,0,0.06);"></div>
<div class="t" style="left:189.30px;top:609.30px;font-size:11.60px;line-height:12.96px;color:#1f2023;font-weight:700;transform:scaleX(0.9490);">Authentication log</div>
<div class="t" style="left:189.30px;top:632.65px;font-size:9.00px;line-height:10.05px;color:#55585d;transform:scaleX(0.9706);">Last 10 attempts</div>
<div class="r" style="left:1011.7px;top:609.2px;width:86.3px;height:16.5px;box-sizing:border-box;border:1.4px solid #4a70a6;border-radius:4px;background:#fff;"></div>
<div class="t" style="left:1016.60px;top:614.32px;font-size:7.60px;line-height:8.49px;color:#1f5fad;font-weight:700;-webkit-text-stroke:0.2px #1f5fad;transform:scaleX(0.9426);">Full authentication log</div>
<div class="t" style="left:193.90px;top:663.34px;font-size:7.80px;line-height:8.71px;color:#2b2c30;transform:scaleX(0.9358);">Timestamp (EDT)</div>
<div class="t" style="left:321.60px;top:663.34px;font-size:7.80px;line-height:8.71px;color:#2b2c30;transform:scaleX(0.9225);">Result</div>
<div class="t" style="left:412.80px;top:663.34px;font-size:7.80px;line-height:8.71px;color:#2b2c30;transform:scaleX(0.9175);">User</div>
<div class="t" style="left:473.50px;top:663.34px;font-size:7.80px;line-height:8.71px;color:#2b2c30;transform:scaleX(0.9832);">Application</div>
<div class="t" style="left:589.30px;top:663.34px;font-size:7.80px;line-height:8.71px;color:#2b2c30;transform:scaleX(0.9575);">Risk-Based Policy Assessment</div>
<svg class="r" style="left:694.7px;top:662.6px" width="7.5" height="7.5" viewBox="0 0 8 8"><circle cx="4" cy="4" r="3.8" fill="#1f2023"/><rect x="3.5" y="3.4" width="1" height="2.8" fill="#fff"/><circle cx="4" cy="2.2" r=".6" fill="#fff"/></svg>
<div class="t" style="left:763.80px;top:663.34px;font-size:7.80px;line-height:8.71px;color:#2b2c30;transform:scaleX(0.9518);">Access Device</div>
<div class="t" style="left:929.40px;top:663.34px;font-size:7.80px;line-height:8.71px;color:#2b2c30;transform:scaleX(0.9754);">Authentication Method</div>
<div class="t" style="left:193.90px;top:690.96px;font-size:9.00px;line-height:10.05px;color:#1f2023;transform:scaleX(0.9449);">1:04:40 PM</div>
<div class="t" style="left:193.90px;top:703.73px;font-size:6.60px;line-height:7.37px;color:#2a2b2f;transform:scaleX(0.9311);">MAR 20, 2025</div>
<svg class="r" style="left:321px;top:692px" width="8.5" height="7" viewBox="0 0 8.5 7"><path d="M0.6 3.6l2.4 2.4L8 0.8" fill="none" stroke="#2a9d62" stroke-width="1.3"/></svg>
<div class="t" style="left:333.60px;top:691.25px;font-size:9.00px;line-height:10.05px;color:#1f2023;transform:scaleX(0.9559);-webkit-text-stroke:0.25px #1f2023;">Granted</div>
<div class="t" style="left:332.00px;top:701.22px;font-size:6.50px;line-height:7.26px;color:#2a2b2f;transform:scaleX(0.9568);">User approved</div>
<div class="t" style="left:412.90px;top:690.80px;font-size:9.50px;line-height:10.61px;color:#1f5fad;transform:scaleX(0.9183);">narroway</div>
<div class="t" style="left:473.50px;top:690.98px;font-size:9.30px;line-height:10.39px;color:#1f5fad;transform:scaleX(0.9419);">Acme Corp</div>
<div class="t" style="left:590.00px;top:691.33px;font-size:8.70px;line-height:9.72px;color:#1f2023;font-weight:700;transform:scaleX(0.9658);">New device session</div>
<div class="t" style="left:590.00px;top:704.03px;font-size:7.70px;line-height:8.60px;color:#2a2b2f;transform:scaleX(0.9702);">Session not found</div>
<div class="r" style="left:589.6px;top:721.7px;width:64px;height:14.2px;box-sizing:border-box;border:1px solid #cfd0d3;border-radius:2px;background:#f3f3f4;"></div>
<div class="t" style="left:595.00px;top:724.31px;font-size:8.50px;line-height:9.49px;color:#1f2023;transform:scaleX(0.8679);">Session missing</div>
<svg class="r" style="left:764px;top:692.5px" width="5" height="6.5" viewBox="0 0 5 6.5"><path d="M0.8 0.6L3.8 3.25L0.8 5.9" fill="none" stroke="#1f2023" stroke-width="1.2"/></svg>
<div class="t" style="left:775.60px;top:691.13px;font-size:8.70px;line-height:9.72px;color:#1f2023;transform:scaleX(0.9779);">Mac OS X 14.7.4 (23H420)</div>
<div class="t" style="left:772.10px;top:702.16px;font-size:6.90px;line-height:7.71px;color:#2a2b2f;transform:scaleX(1.0858);">As reported by Duo Desktop</div>
<svg class="r" style="left:929.8px;top:693.5px" width="5" height="6.5" viewBox="0 0 5 6.5"><path d="M0.8 0.6L3.8 3.25L0.8 5.9" fill="none" stroke="#1f2023" stroke-width="1.2"/></svg>
<div class="t" style="left:941.20px;top:692.33px;font-size:8.70px;line-height:9.72px;color:#1f2023;">Roaming authenticator (2fa)</div>
</body></html>
